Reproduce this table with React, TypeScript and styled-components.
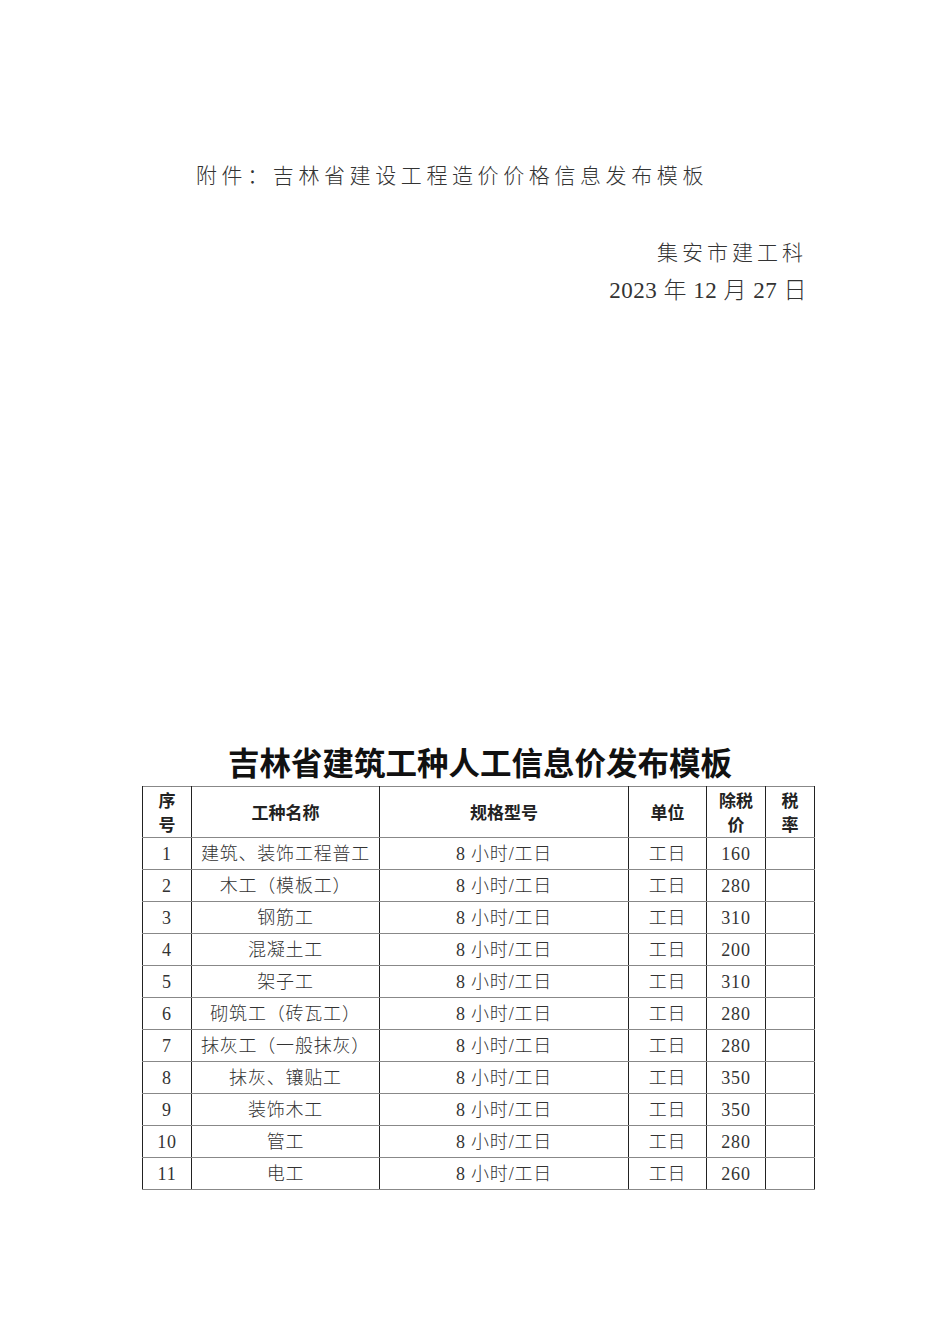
import React from "react";
import styled, { createGlobalStyle } from "styled-components";

const GlobalStyle = createGlobalStyle`
  html, body {
    margin: 0;
    padding: 0;
    background: #ffffff;
  }
  body {
    font-family: "Liberation Serif", "Noto Sans CJK SC", serif;
    color: #222;
  }
`;

type Row = {
  no: number;
  name: string;
  spec: string;
  unit: string;
  price: number;
};

const rows: Row[] = [
  { no: 1, name: "建筑、装饰工程普工", spec: "8 小时/工日", unit: "工日", price: 160 },
  { no: 2, name: "木工（模板工）", spec: "8 小时/工日", unit: "工日", price: 280 },
  { no: 3, name: "钢筋工", spec: "8 小时/工日", unit: "工日", price: 310 },
  { no: 4, name: "混凝土工", spec: "8 小时/工日", unit: "工日", price: 200 },
  { no: 5, name: "架子工", spec: "8 小时/工日", unit: "工日", price: 310 },
  { no: 6, name: "砌筑工（砖瓦工）", spec: "8 小时/工日", unit: "工日", price: 280 },
  { no: 7, name: "抹灰工（一般抹灰）", spec: "8 小时/工日", unit: "工日", price: 280 },
  { no: 8, name: "抹灰、镶贴工", spec: "8 小时/工日", unit: "工日", price: 350 },
  { no: 9, name: "装饰木工", spec: "8 小时/工日", unit: "工日", price: 350 },
  { no: 10, name: "管工", spec: "8 小时/工日", unit: "工日", price: 280 },
  { no: 11, name: "电工", spec: "8 小时/工日", unit: "工日", price: 260 },
];

const colWidths = [49, 188, 249, 78, 59, 49];

const App: React.FC = () => {
  return (
    <Page>
      <GlobalStyle />
      <Attachment>附件：吉林省建设工程造价价格信息发布模板</Attachment>

      <Signature>
        <Org>集安市建工科</Org>
        <DateLine>2023 年 12 月 27 日</DateLine>
      </Signature>

      <TableTitle>吉林省建筑工种人工信息价发布模板</TableTitle>

      <PriceTable>
        <colgroup>
          {colWidths.map((w, i) => (
            <col key={i} style={{ width: w }} />
          ))}
        </colgroup>
        <thead>
          <tr>
            <HeadCell>序<br />号</HeadCell>
            <HeadCell>工种名称</HeadCell>
            <HeadCell>规格型号</HeadCell>
            <HeadCell>单位</HeadCell>
            <HeadCell>除税<br />价</HeadCell>
            <HeadCell>税<br />率</HeadCell>
          </tr>
        </thead>
        <tbody>
          {rows.map((r) => (
            <tr key={r.no}>
              <Cell>{r.no}</Cell>
              <Cell>{r.name}</Cell>
              <Cell>{r.spec}</Cell>
              <Cell>{r.unit}</Cell>
              <Cell>{r.price}</Cell>
              <Cell />
            </tr>
          ))}
        </tbody>
      </PriceTable>
    </Page>
  );
};

const Page = styled.div`
  width: 950px;
  height: 1344px;
  box-sizing: border-box;
  padding-top: 160px;
  display: flex;
  flex-direction: column;
`;

const Attachment = styled.div`
  margin-left: 196px;
  font-size: 21px;
  line-height: 32px;
  letter-spacing: 4.6px;
  font-weight: 300;
  color: #333;
  white-space: nowrap;
`;

const Signature = styled.div`
  margin-top: 42px;
  padding-right: 143px;
  display: flex;
  flex-direction: column;
  align-items: flex-end;
  color: #333;
  font-weight: 300;
`;

const Org = styled.div`
  font-size: 21px;
  line-height: 38px;
  letter-spacing: 4px;
`;

const DateLine = styled.div`
  font-size: 23px;
  line-height: 38px;
  letter-spacing: 0.5px;
`;

const TableTitle = styled.div`
  margin-top: 431px;
  padding-left: 10px;
  text-align: center;
  font-family: "Noto Sans CJK SC", sans-serif;
  font-weight: 700;
  font-size: 31.5px;
  line-height: 40px;
  color: #111;
`;

const PriceTable = styled.table`
  margin-top: 5px;
  margin-left: 142px;
  width: 672px;
  border-collapse: collapse;
  table-layout: fixed;
  border-top: 1.5px solid #888;
  border-bottom: 1.5px solid #777;
  border-left: 1px solid #333;
  border-right: 1px solid #333;
`;

const HeadCell = styled.th`
  height: 50px;
  padding: 0;
  text-align: center;
  vertical-align: middle;
  font-family: "Noto Sans CJK SC", sans-serif;
  font-weight: 700;
  font-size: 17px;
  line-height: 24px;
  color: #222;
  border-left: 1px solid #222;
  border-right: 1px solid #222;
  border-bottom: 1.5px solid #888;
`;

const Cell = styled.td`
  height: 31px;
  padding: 0;
  text-align: center;
  vertical-align: middle;
  font-size: 18px;
  line-height: 30px;
  letter-spacing: 0.8px;
  font-weight: 300;
  color: #333;
  white-space: nowrap;
  overflow: hidden;
  border-left: 1px solid #222;
  border-right: 1px solid #222;
  border-bottom: 1.5px solid #888;
`;

export default App;
